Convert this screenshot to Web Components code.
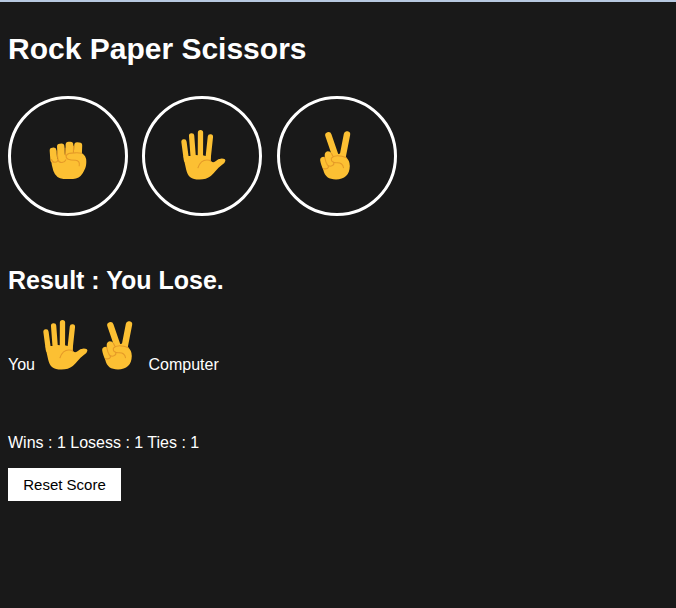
<!DOCTYPE html>
<html lang="en">
<head>
<meta charset="utf-8">
<title>Rock Paper Scissors</title>
<style>
html,body{margin:0;height:100%;background:#191919;overflow:hidden}
</style>
</head>
<body>
<rps-game></rps-game>
<script>
const GOLD = '#fcc033', LINE = '#e59a28';
const HANDS = {
  rock: ['3 -4 50 60', `
    <g fill="${GOLD}">
      <rect x="10" y="17.6" width="6.8" height="15" rx="2.8" transform="rotate(-4 13.4 25)"/>
      <rect x="17.3" y="13.6" width="7.4" height="18" rx="2.9" transform="rotate(-3 21 22)"/>
      <rect x="25.6" y="11.7" width="7.7" height="18" rx="3"/>
      <rect x="34" y="12.4" width="8" height="18" rx="3" transform="rotate(2 38 21)"/>
      <path d="M10.9 28 L17.5 29 L26 23.8 L33 22 L42 23.3 Q46.2 26 46.3 31 C46.5 37 44.6 40 42.5 43.5 Q39.3 48.8 33 48.9 L23.5 48.9 Q16 48.4 13.4 41 Q11.4 35 10.9 28 Z"/>
    </g>
    <g fill="none" stroke="${LINE}" stroke-width="1.1" stroke-linecap="round" stroke-linejoin="round">
      <path d="M11.5 29.5 Q12.2 32.4 15 32.3 Q18.2 32 17.8 29 M17.1 21 L17.9 29.5 Q18.7 32.7 22 32.5 Q25 32.2 25.8 29.8 M25 18 L25.5 25 M33.6 16 L33.4 22.6 M41.6 23.3 Q38.5 22.6 34.5 22.9 Q27.3 22.9 26.2 25.7 C25.5 29.4 29.2 30.2 35.5 30.3 Q40.2 30.8 39.2 35.8"/>
    </g>`],
  paper: ['3 2 50 60', `
    <g fill="none" stroke="${GOLD}" stroke-width="5.3" stroke-linecap="round">
      <path d="M10 18 L12.4 36"/><path d="M17.6 11.8 L19.3 34"/><path d="M26.5 8.6 L26.4 34"/><path d="M36.4 12.9 L33.9 36"/>
    </g>
    <path fill="${GOLD}" d="M9.6 32 L16.8 32 L21.5 30.9 L24.2 31.3 L28.9 31.3 L31.6 32 L36.9 31 L36.6 36.5 Q38.4 39.6 41.5 37.2 Q44 34.6 47.8 34.5 Q51.4 34.5 51.4 36.8 Q51.1 39.4 47.5 41.2 C43 44.2 41 48.4 36.8 52 Q32.3 55.6 25.5 55.6 C17 55.6 14 52.8 12.2 45.8 Q10.5 39 9.6 32Z"/>
    <path fill="none" stroke="${LINE}" stroke-width="1.15" stroke-linecap="round" d="M24 43.7 Q26.7 35.9 33 36 Q36 36 36.8 37.2"/>`],
  scissors: ['4 2 50 60', `
    <g fill="none" stroke="${GOLD}" stroke-width="6.4" stroke-linecap="round">
      <path d="M20.4 11.2 L28.2 34"/><path d="M39 10.4 L34.4 34"/>
    </g>
    <path fill="${GOLD}" d="M16.7 31.8 Q16.4 27.8 19.8 27.2 Q22.5 27.2 23.5 29.2 L27 31 L37.5 28 L37.6 33 Q41.8 36.2 41.8 42 C41.6 51 36.5 55.4 28 55.4 C20.8 55.4 16.8 52.5 15.3 46 C13.6 42.2 12.6 39 12.2 36.5 Q11.8 33.4 14.4 32.9 Q16.1 32.5 16.8 34Z"/>
    <path fill="none" stroke="${LINE}" stroke-width="1.1" stroke-linecap="round" stroke-linejoin="round" d="M16.7 33.3 Q17.3 38.5 20.6 43 Q19.2 45.6 15.6 44.6 M19 40.6 Q21.3 43.2 24.4 41.6 Q26.7 40.3 25.5 38 M23.5 29.4 L25 32.6 M38 33.6 Q34.2 31.9 29.5 31.8 Q25.4 31.8 23.4 34.2 Q22.5 38.4 27.8 38.8 Q34.5 37.9 35.5 43.7"/>`]
};
const define = (name, render) => customElements.define(name, class extends HTMLElement {
  constructor() {
    super();
    this.attachShadow({mode: 'open'}).innerHTML = render(this);
  }
});
define('hand-icon', el => {
  const [box, art] = HANDS[el.getAttribute('kind')];
  return `<style>:host{display:block;width:50px;height:60px;flex:none}svg{display:block}</style>
    <svg width="50" height="60" viewBox="${box}" aria-hidden="true">${art}</svg>`;
});
define('move-button', el => `<style>
  :host{display:block;width:120px;height:120px}
  button{box-sizing:border-box;width:120px;height:120px;padding:0;border:3px solid #fff;border-radius:50%;background:transparent;display:flex;align-items:center;justify-content:center;cursor:pointer}
  </style><button aria-label="${el.getAttribute('kind')}"><hand-icon kind="${el.getAttribute('kind')}"></hand-icon></button>`);
define('round-result', () => `<style>
  :host{display:block;color:#fff}
  h2{margin:0;font-size:25px;line-height:30px}
  .played{display:flex;align-items:flex-end;margin-top:21px;height:60px;line-height:18px}
  .you,.computer{padding-bottom:2px}
  .you{width:31px}.gap{width:4.7px}.computer{margin-left:4.8px}
  </style><h2><slot></slot></h2>
  <div class="played"><span class="you">You</span><hand-icon kind="paper"></hand-icon><span class="gap"></span><hand-icon kind="scissors"></hand-icon><span class="computer">Computer</span></div>`);
define('reset-button', () => `<style>
  :host{display:block}
  button{display:block;width:113px;height:33px;padding:0;border:0;background:#fff;color:#000;font:15px/33px "Liberation Sans",Arial,sans-serif;cursor:pointer}
  </style><button><slot></slot></button>`);
define('rps-game', () => `<style>
  :host{display:block;box-sizing:border-box;height:608px;padding:0 8px;border-top:2px solid #b7c8e0;background:#191919;color:#fff;font:16px/18px "Liberation Sans",Arial,sans-serif}
  h1{margin:0;padding-top:29px;font-size:30px;line-height:36px}
  .moves{display:flex;gap:14.45px;margin-top:29px}
  round-result{margin-top:49px}
  .score{margin:58px 0 16px}
  </style>
  <h1>Rock Paper Scissors</h1>
  <div class="moves"><move-button kind="rock"></move-button><move-button kind="paper"></move-button><move-button kind="scissors"></move-button></div>
  <round-result>Result : You Lose.</round-result>
  <div class="score">Wins : 1 Losess : 1 Ties : 1</div>
  <reset-button>Reset Score</reset-button>`);
</script>
</body>
</html>
